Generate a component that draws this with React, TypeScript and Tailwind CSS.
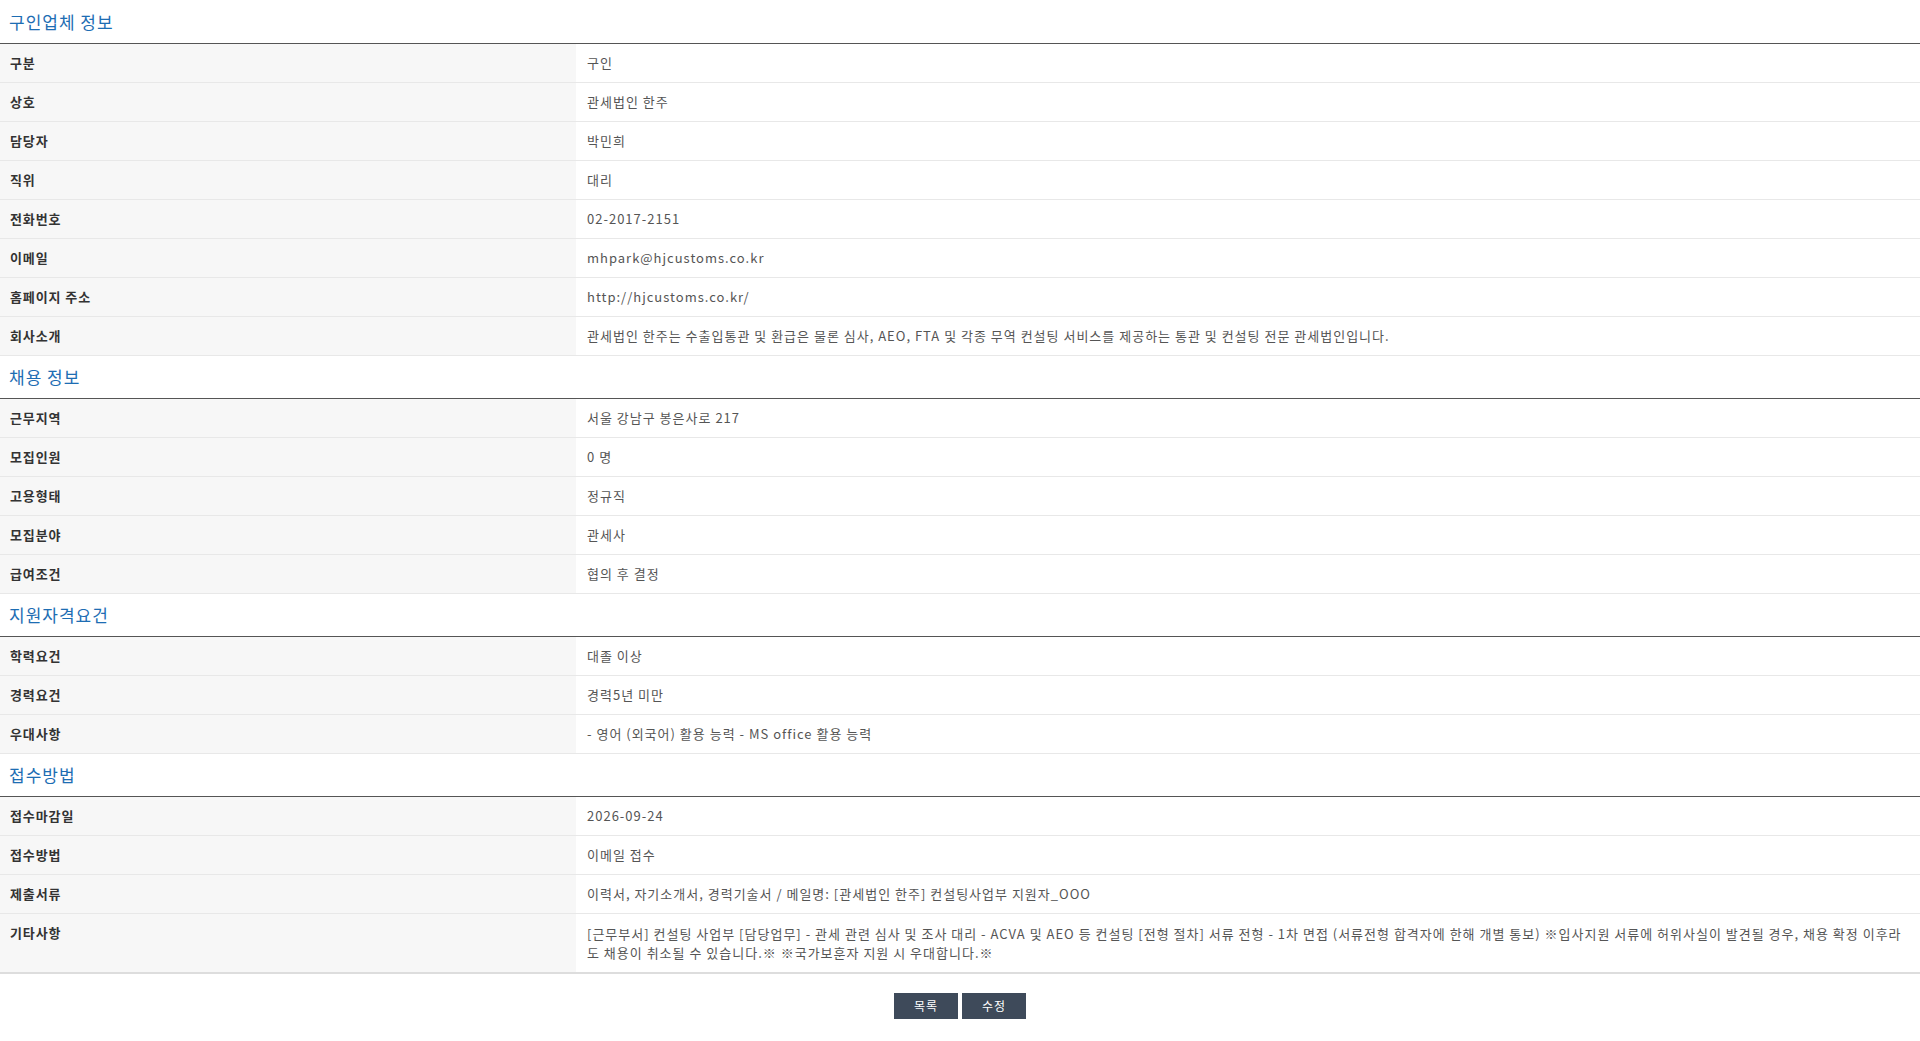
import React from 'react'

type Row = { label: string; value: string }

const sections: { title: string; rows: Row[] }[] = [
  {
    title: '구인업체 정보',
    rows: [
      { label: '구분', value: '구인' },
      { label: '상호', value: '관세법인 한주' },
      { label: '담당자', value: '박민희' },
      { label: '직위', value: '대리' },
      { label: '전화번호', value: '02-2017-2151' },
      { label: '이메일', value: 'mhpark@hjcustoms.co.kr' },
      { label: '홈페이지 주소', value: 'http://hjcustoms.co.kr/' },
      {
        label: '회사소개',
        value:
          '관세법인 한주는 수출입통관 및 환급은 물론 심사, AEO, FTA 및 각종 무역 컨설팅 서비스를 제공하는 통관 및 컨설팅 전문 관세법인입니다.',
      },
    ],
  },
  {
    title: '채용 정보',
    rows: [
      { label: '근무지역', value: '서울 강남구 봉은사로 217' },
      { label: '모집인원', value: '0 명' },
      { label: '고용형태', value: '정규직' },
      { label: '모집분야', value: '관세사' },
      { label: '급여조건', value: '협의 후 결정' },
    ],
  },
  {
    title: '지원자격요건',
    rows: [
      { label: '학력요건', value: '대졸 이상' },
      { label: '경력요건', value: '경력5년 미만' },
      { label: '우대사항', value: '- 영어 (외국어) 활용 능력 - MS office 활용 능력' },
    ],
  },
  {
    title: '접수방법',
    rows: [
      { label: '접수마감일', value: '2026-09-24' },
      { label: '접수방법', value: '이메일 접수' },
      { label: '제출서류', value: '이력서, 자기소개서, 경력기술서 / 메일명: [관세법인 한주] 컨설팅사업부 지원자_OOO' },
      {
        label: '기타사항',
        value:
          '[근무부서] 컨설팅 사업부 [담당업무] - 관세 관련 심사 및 조사 대리 - ACVA 및 AEO 등 컨설팅 [전형 절차] 서류 전형 - 1차 면접 (서류전형 합격자에 한해 개별 통보) ※입사지원 서류에 허위사실이 발견될 경우, 채용 확정 이후라도 채용이 취소될 수 있습니다.※ ※국가보훈자 지원 시 우대합니다.※',
      },
    ],
  },
]

export default function App() {
  return (
    <div
      className="w-full min-h-screen bg-white pt-px"
      style={{ fontFamily: "'Noto Sans CJK KR', 'Noto Sans', sans-serif" }}
    >
      {sections.map((s, si) => (
        <section key={s.title}>
          <h3 className="h-[43px] flex items-center pl-[9px] text-[17px] tracking-[1px] text-[#1d6db3] font-normal border-b border-[#555]">
            {s.title}
          </h3>
          <table className="w-full border-collapse">
            <tbody>
              {s.rows.map((r, ri) => {
                const last = si === sections.length - 1 && ri === s.rows.length - 1
                return (
                  <tr
                    key={r.label}
                    className={last ? 'border-b-2 border-[#dddddd]' : 'border-b border-[#e8e8e8]'}
                  >
                    <th className="w-[30%] bg-[#f7f7f7] text-left align-top pl-[10px] pr-2 py-[10px] text-[13px] leading-[18px] tracking-[0.9px] font-bold text-[#333]">
                      {r.label}
                    </th>
                    <td
                      className={
                        'align-top pl-[11px] pr-4 py-[10px] text-[13px] tracking-[1px] text-[#555] ' +
                        (last ? 'leading-[19px]' : 'leading-[18px]')
                      }
                    >
                      {r.value}
                    </td>
                  </tr>
                )
              })}
            </tbody>
          </table>
        </section>
      ))}

      {/* buttons */}
      <div className="flex justify-center gap-1 pt-[19px]">
        <button className="w-16 h-[26px] bg-[#3e4a5a] text-white text-[12px] tracking-[1px]">목록</button>
        <button className="w-16 h-[26px] bg-[#3e4a5a] text-white text-[12px] tracking-[1px]">수정</button>
      </div>
    </div>
  )
}
